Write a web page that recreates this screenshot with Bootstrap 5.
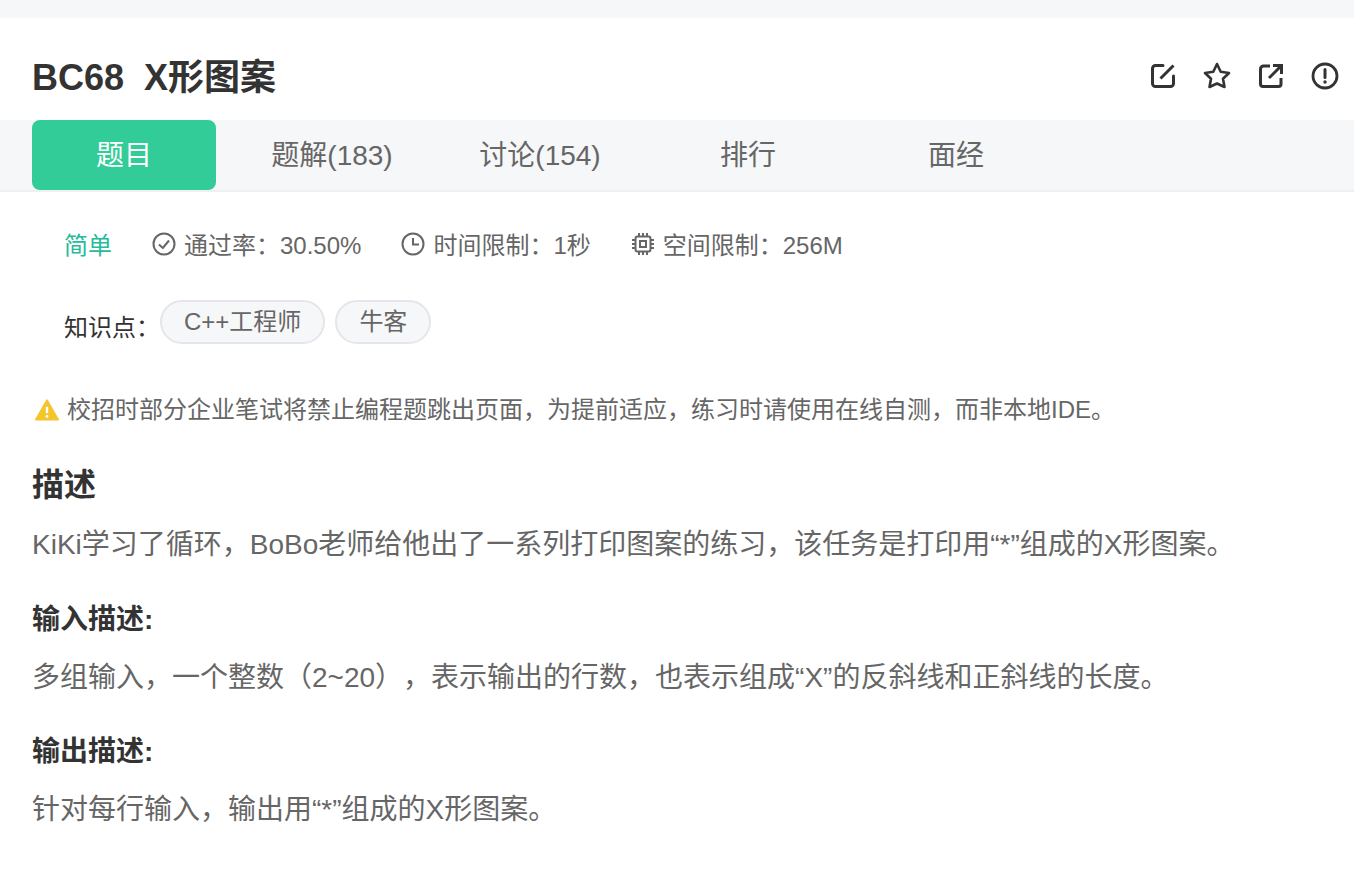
<!DOCTYPE html>
<html lang="zh">
<head>
<meta charset="utf-8">
<title>BC68 X形图案</title>
<link href="https://cdn.jsdelivr.net/npm/bootstrap@5.3.0/dist/css/bootstrap.min.css" rel="stylesheet">
<style>
html,body{height:100%;}
body{font-family:"Liberation Sans","Noto Sans CJK SC",sans-serif;background:#fff;color:#333;overflow:hidden;text-spacing-trim:space-all;}
.top-strip{height:18px;background:#f6f7f9;}
.title-bar{height:102px;padding:14px 15px 0 32px;}
.prob-title{font-size:36px;font-weight:700;line-height:48px;margin:4px 0 0;color:#333;white-space:pre;}
.tool-icons{gap:26px;}
.tool-icons svg{width:28px;height:28px;display:block;}
.tab-bar{height:72px;background:#f6f7f9;border-bottom:2px solid #eef0f2;padding-left:32px;gap:24px;}
.tab-item{width:184px;height:70px;padding-top:2px;font-size:28px;color:#666;display:flex;align-items:center;justify-content:center;border-radius:8px;}
.tab-item.is-on{background:#32cc99;color:#fff;}
.meta-row{height:108px;padding:0 0 0 64px;font-size:24px;color:#666;}
.meta-easy{color:#25bb9b;margin-right:40px;}
.meta-item{margin-right:40px;gap:8px;}
.meta-item svg{width:24px;height:24px;margin-bottom:5px;}
.know-row{padding-left:64px;font-size:24px;color:#333;height:44px;}
.know-label{padding-top:12px;margin-right:0;}
.chip-pill{height:44px;border:2px solid #e4e6eb;background:#f6f7f9;border-radius:22px;padding:0 22px;color:#666;margin-right:10px;display:flex;align-items:center;}
.warn-row{padding-left:35px;margin-top:48px;font-size:24px;color:#666;line-height:36px;gap:8px;}
.warn-row svg{width:24px;height:24px;}
.sect-h{font-size:32px;font-weight:700;color:#333;padding-left:32px;margin:35px 0 0;line-height:44px;}
.sub-h{font-size:28px;font-weight:700;color:#333;padding-left:32px;margin:35px 0 0;line-height:40px;}
.body-txt{font-size:28px;color:#666;padding-left:32px;margin:18px 0 0;line-height:40px;white-space:nowrap;}
.body-txt + .sub-h + .body-txt + .sub-h{margin-top:34px;}
</style>
</head>
<body>
<div class="top-strip"></div>
<div class="title-bar d-flex align-items-center justify-content-between">
  <h1 class="prob-title">BC68  X形图案</h1>
  <div class="tool-icons d-flex align-items-center">
    <svg viewBox="0 0 28 28" fill="none" stroke="#333" stroke-width="3" stroke-linecap="round" stroke-linejoin="round"><path d="M14 3.500H6.500a3 3 0 0 0-3 3v15a3 3 0 0 0 3 3h15a3 3 0 0 0 3-3V14"/><path d="M11.500 16.500 24.500 3.500" stroke-linecap="butt"/></svg>
    <svg viewBox="0 0 28 28" fill="none" stroke="#333" stroke-width="2.600" stroke-linejoin="round"><path d="M14 2 17.700 9.800 26 11 20 16.800 21.500 25 14 21.500 6.500 25 8 16.800 2 11 10.300 9.800Z"/></svg>
    <svg viewBox="0 0 28 28" fill="none" stroke="#333" stroke-width="3" stroke-linejoin="round"><path d="M13 4H6.500a3 3 0 0 0-3 3v15a2.500 2.500 0 0 0 2.500 2.500h15.500a2.500 2.500 0 0 0 2.500-2.500V16"/><path d="M12 16 23.500 4.500"/><path d="M16 3.500H24.500V12" stroke-linejoin="miter"/></svg>
    <svg viewBox="0 0 28 28" fill="none" stroke="#333" stroke-width="2.800"><circle cx="14" cy="14" r="12"/><path d="M14 7.500V15.500" stroke-linecap="round" stroke-width="3"/><circle cx="14" cy="20" r="1.700" fill="#333" stroke="none"/></svg>
  </div>
</div>
<div class="tab-bar d-flex">
  <div class="tab-item is-on">题目</div>
  <div class="tab-item">题解(183)</div>
  <div class="tab-item">讨论(154)</div>
  <div class="tab-item">排行</div>
  <div class="tab-item">面经</div>
</div>
<div class="meta-row d-flex align-items-center">
  <span class="meta-easy">简单</span>
  <span class="meta-item d-flex align-items-center">
    <svg viewBox="0 0 24 24" fill="none" stroke="#666" stroke-width="2"><circle cx="12" cy="12" r="10.500"/><path d="M7 12.500 10.800 16 17 8.500" stroke-linejoin="round"/></svg>
    通过率：30.50%
  </span>
  <span class="meta-item d-flex align-items-center">
    <svg viewBox="0 0 24 24" fill="none" stroke="#666" stroke-width="2"><circle cx="12" cy="12" r="10.500"/><path d="M12 6V12.500H18"/></svg>
    时间限制：1秒
  </span>
  <span class="meta-item d-flex align-items-center">
    <svg viewBox="0 0 24 24" fill="none" stroke="#666" stroke-width="2"><rect x="4.500" y="4.500" width="15" height="15" rx="2"/><rect x="9" y="9" width="6" height="6"/><path d="M8 1V4M12 1V4M16 1V4M8 20V23M12 20V23M16 20V23M1 8H4M1 12H4M1 16H4M20 8H23M20 12H23M20 16H23"/></svg>
    空间限制：256M
  </span>
</div>
<div class="know-row d-flex align-items-center">
  <span class="know-label">知识点：</span>
  <span class="chip-pill">C++工程师</span>
  <span class="chip-pill">牛客</span>
</div>
<div class="warn-row d-flex align-items-center">
  <svg viewBox="0 0 26 26"><path d="M13 2.500 25 23.500H1Z" fill="#f4c62c" stroke="#f4c62c" stroke-width="2" stroke-linejoin="round"/><path d="M13 9.500V16.500" stroke="#fff" stroke-width="2.600"/><circle cx="13" cy="20" r="1.500" fill="#fff"/></svg>
  <span>校招时部分企业笔试将禁止编程题跳出页面，为提前适应，练习时请使用在线自测，而非本地IDE。</span>
</div>
<h2 class="sect-h">描述</h2>
<p class="body-txt">KiKi学习了循环，BoBo老师给他出了一系列打印图案的练习，该任务是打印用“*”组成的X形图案。</p>
<h3 class="sub-h">输入描述:</h3>
<p class="body-txt">多组输入，一个整数（2~20），表示输出的行数，也表示组成“X”的反斜线和正斜线的长度。</p>
<h3 class="sub-h">输出描述:</h3>
<p class="body-txt">针对每行输入，输出用“*”组成的X形图案。</p>
<script src="https://cdn.jsdelivr.net/npm/bootstrap@5.3.0/dist/js/bootstrap.bundle.min.js"></script>
</body>
</html>
